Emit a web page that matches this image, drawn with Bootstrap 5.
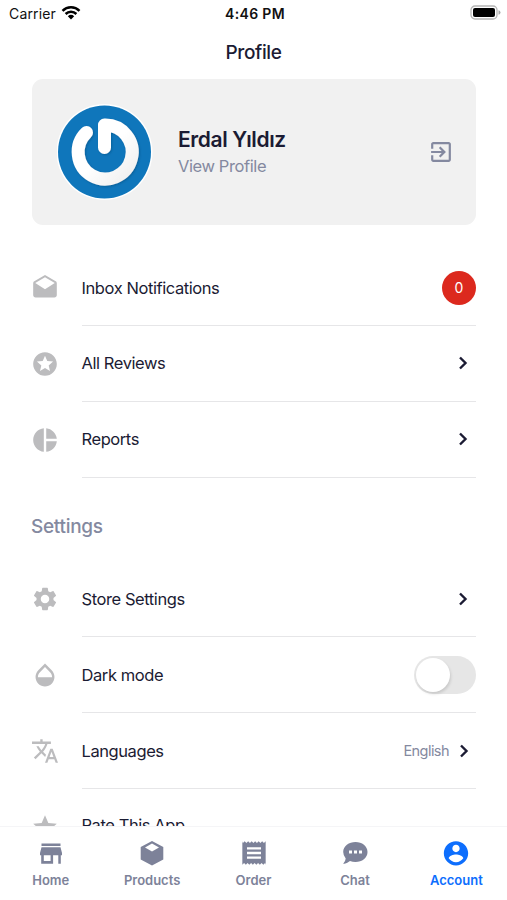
<!DOCTYPE html>
<html lang="en">
<head>
<meta charset="utf-8">
<meta name="viewport" content="width=device-width, initial-scale=1">
<title>Profile</title>
<link href="https://cdn.jsdelivr.net/npm/bootstrap@5.3.0/dist/css/bootstrap.min.css" rel="stylesheet">
<style>
:root{--ink:#1b1b33;--muted:#8489a0;--glyph:#bcbcbe}
body{font-family:Inter,"Liberation Sans",sans-serif;color:var(--ink);background:#fff}
svg{display:block;flex:none;fill:currentColor}
.screen{height:900px;overflow:hidden}
.status-bar{height:28px;padding:0 6px 0 9px;color:#111;font-size:14px;line-height:28px}
.status-bar>div{flex:1 1 0}
.carrier-name{letter-spacing:.15px;margin-right:5px}
.clock{font-weight:600;letter-spacing:.35px}
.page-title{height:51px;padding-top:12px;font-size:19px;line-height:26px;font-weight:500;letter-spacing:-.4px}
.scroller{padding:0 31px;min-height:0}
.profile-card{height:146px;flex:none;background:#f1f1f1;border-radius:11px;padding:0 24px 0 25px;margin-left:1px}
.profile-copy{margin-left:25px}
.profile-name{font-size:21px;line-height:28px;font-weight:600;letter-spacing:-.4px}
.profile-link{font-size:16.5px;line-height:24px;color:var(--muted);letter-spacing:-.4px}
.group-one{margin-top:25px}
.entry{height:76px;flex:none}
.entry-icon{width:51px;color:var(--glyph);padding-left:1px}
.entry-body{border-bottom:1px solid #e6e6e8;font-size:16.5px;letter-spacing:-.42px;line-height:24px}
.upper .entry-body,.upper .entry-icon{padding-bottom:1px}
.entry.group-one .entry-body{padding-bottom:0}
.entry-body>span:first-child{margin-left:-.5px}
.section-title{height:83px;flex:none;padding-top:36px;font-size:19px;line-height:26px;font-weight:500;color:var(--muted);letter-spacing:-.3px}
.count{width:34px;height:34px;background:#dc291e;font-size:14px;letter-spacing:0}
.toggle{width:62px;height:38px;border-radius:19px;background:#e6e6e6;padding:2px}
.knob{width:34px;height:34px;border-radius:50%;background:#fff;box-shadow:1px 2px 3px rgba(0,0,0,.13)}
.lang{font-size:14.500px;color:var(--muted);letter-spacing:-.55px;margin-right:9px}
.chev{margin-right:7px}
.lang+.chev{margin-right:6px}
.tabs{height:74px;flex:none;background:#fff;border-top:1px solid #f5f5f7;color:#7d8299;font-size:13px;font-weight:600;line-height:18px}
.tab{flex:1 1 0;padding-top:12px}
.tab.current{color:#0d6efd}
.tab span{margin-top:4px}
</style>
<script src="https://cdn.jsdelivr.net/npm/bootstrap@5.3.0/dist/js/bootstrap.bundle.min.js"></script>
</head>
<body>
<div class="screen d-flex flex-column">
  <header>
    <div class="status-bar d-flex">
      <div class="d-flex align-items-center"><span class="carrier-name">Carrier</span>
        <svg class="mb-1" width="20" height="15" viewBox="0 0 20 15"><path fill="none" stroke="#000" stroke-width="2.500" d="M1.500 5.800a12.200 12.200 0 0 1 17 0M4.600 9a7.700 7.700 0 0 1 10.800 0"/><path fill="#000" d="M6.800 11.300a4.700 4.700 0 0 1 6.400 0L10 14.500z"/></svg>
      </div>
      <div class="clock text-center">4:46 PM</div>
      <div class="d-flex align-items-center justify-content-end">
        <svg class="mb-1" width="31" height="15" viewBox="0 0 31 15"><rect x="1" y="1" width="26" height="13" rx="4" fill="#fff" stroke="#b5b5b5" stroke-width="1.300"/><rect x="3" y="3" width="22" height="9" rx="2" fill="#000"/><path d="M28.500 5.200q2 .5 2 2.300t-2 2.300z" fill="#aaa"/></svg>
      </div>
    </div>
    <h1 class="page-title text-center m-0">Profile</h1>
  </header>
  <main class="scroller d-flex flex-column flex-grow-1 overflow-hidden">
    <section class="profile-card d-flex align-items-center">
      <svg width="96" height="96" viewBox="0 0 96 96">
        <defs><filter id="soft" x="-20%" y="-20%" width="140%" height="140%"><feDropShadow dx="1" dy="1" stdDeviation="1.200" flood-color="#064a78" flood-opacity=".5"/></filter>
        <linearGradient id="tube" x1="0" y1="0" x2="1" y2="1"><stop offset=".5" stop-color="#fff"/><stop offset="1" stop-color="#efefef"/></linearGradient></defs>
        <circle cx="47.500" cy="48" r="48" fill="#fff"/><circle cx="47.500" cy="48" r="46.500" fill="#0f76bb"/>
        <path filter="url(#soft)" fill="none" stroke="url(#tube)" stroke-width="13" stroke-linecap="round" stroke-linejoin="round" d="M29.500 28.500A27 27 0 1 0 47.500 21V43.500"/>
      </svg>
      <div class="profile-copy flex-grow-1">
        <div class="profile-name">Erdal Yıldız</div>
        <div class="profile-link">View Profile</div>
      </div>
      <svg width="22" height="22" viewBox="2 2 20 20" color="#8489a0"><path d="M10.090 15.590 11.500 17l5-5-5-5-1.410 1.410L12.670 11H3v2h9.670l-2.580 2.590zM19 3H5c-1.110 0-2 .9-2 2v4h2V5h14v14H5v-4H3v4c0 1.100.89 2 2 2h14c1.100 0 2-.9 2-2V5c0-1.100-.9-2-2-2z"/></svg>
    </section>

    <div class="entry upper d-flex group-one">
      <div class="entry-icon d-flex align-items-center"><svg width="26" height="26" viewBox="1 1 22 22"><path d="M21.990 8c0-.72-.37-1.350-.94-1.700L12 1 2.950 6.300C2.380 6.650 2 7.280 2 8v10c0 1.100.9 2 2 2h16c1.100 0 2-.9 2-2l-.01-10zM12 13 3.740 7.840 12 3l8.260 4.840L12 13z"/></svg></div>
      <div class="entry-body d-flex align-items-center justify-content-between flex-grow-1"><span>Inbox Notifications</span><span class="count rounded-circle text-white d-flex align-items-center justify-content-center">0</span></div>
    </div>
    <div class="entry upper d-flex">
      <div class="entry-icon d-flex align-items-center"><svg width="26" height="26" viewBox="1 1 22 22"><path d="M11.990 2C6.470 2 2 6.480 2 12s4.470 10 9.990 10C17.520 22 22 17.520 22 12S17.520 2 11.990 2zm4.240 16L12 15.450 7.770 18l1.120-4.810-3.730-3.230 4.920-.42L12 5l1.920 4.530 4.920.42-3.730 3.230L16.230 18z"/></svg></div>
      <div class="entry-body d-flex align-items-center justify-content-between flex-grow-1"><span>All Reviews</span><svg class="chev" width="12" height="16" viewBox="0 0 12 16"><path d="m3 2.500 5.500 5.500L3 13.500" fill="none" stroke="currentColor" stroke-width="2.400"/></svg></div>
    </div>
    <div class="entry upper d-flex">
      <div class="entry-icon d-flex align-items-center"><svg width="26" height="26" viewBox="1 1 22 22"><path d="M11 2v20c-5.070-.5-9-4.790-9-10s3.930-9.500 9-10zm2.030 0v8.990H22c-.47-4.740-4.240-8.520-8.970-8.990zm0 11.010V22c4.740-.47 8.500-4.250 8.970-8.990h-8.970z"/></svg></div>
      <div class="entry-body d-flex align-items-center justify-content-between flex-grow-1"><span>Reports</span><svg class="chev" width="12" height="16" viewBox="0 0 12 16"><path d="m3 2.500 5.500 5.500L3 13.500" fill="none" stroke="currentColor" stroke-width="2.400"/></svg></div>
    </div>

    <h2 class="section-title m-0">Settings</h2>

    <div class="entry d-flex">
      <div class="entry-icon d-flex align-items-center"><svg width="26" height="26" viewBox="1 1 22 22"><path d="M19.140 12.940c.04-.3.06-.61.06-.94 0-.32-.02-.64-.07-.94l2.030-1.580c.18-.14.23-.41.12-.61l-1.920-3.320c-.12-.22-.37-.29-.59-.22l-2.390.96c-.5-.38-1.030-.7-1.620-.94l-.36-2.540c-.04-.24-.24-.41-.48-.41h-3.840c-.24 0-.43.17-.47.41l-.36 2.540c-.59.24-1.130.57-1.620.94l-2.390-.96c-.22-.08-.47 0-.59.22L2.740 8.870c-.12.21-.08.47.12.61l2.030 1.580c-.05.3-.09.63-.09.94s.02.64.07.94l-2.030 1.580c-.18.14-.23.41-.12.61l1.920 3.320c.12.22.37.29.59.22l2.390-.96c.5.38 1.030.7 1.620.94l.36 2.540c.05.24.24.41.48.41h3.840c.24 0 .44-.17.47-.41l.36-2.540c.59-.24 1.130-.56 1.620-.94l2.390.96c.22.08.47 0 .59-.22l1.920-3.320c.12-.22.07-.47-.12-.61l-2.010-1.580zM12 15.600c-1.980 0-3.600-1.620-3.600-3.600s1.620-3.600 3.600-3.600 3.600 1.620 3.600 3.600-1.620 3.600-3.600 3.600z"/></svg></div>
      <div class="entry-body d-flex align-items-center justify-content-between flex-grow-1"><span>Store Settings</span><svg class="chev" width="12" height="16" viewBox="0 0 12 16"><path d="m3 2.500 5.500 5.500L3 13.500" fill="none" stroke="currentColor" stroke-width="2.400"/></svg></div>
    </div>
    <div class="entry d-flex">
      <div class="entry-icon d-flex align-items-center"><svg width="26" height="26" viewBox="1 1 22 22"><path d="M17.660 8 12 2.350 6.340 8C4.780 9.560 4 11.640 4 13.640s.78 4.110 2.340 5.670 3.610 2.350 5.660 2.350 4.100-.79 5.660-2.350S20 15.640 20 13.640 19.220 9.560 17.660 8zM6 14c.01-2 .62-3.270 1.760-4.400L12 5.270l4.240 4.380C17.380 10.770 17.990 12 18 14H6z"/></svg></div>
      <div class="entry-body d-flex align-items-center justify-content-between flex-grow-1"><span>Dark mode</span><div class="toggle" role="switch" aria-checked="false"><div class="knob"></div></div></div>
    </div>
    <div class="entry d-flex">
      <div class="entry-icon d-flex align-items-center"><svg width="26" height="26" viewBox="1 1 22 22"><path d="m12.870 15.070-2.540-2.510.03-.03c1.740-1.940 2.980-4.170 3.710-6.530H17V4h-7V2H8v2H1v1.990h11.170C11.500 7.920 10.440 9.750 9 11.350 8.070 10.320 7.300 9.190 6.690 8h-2c.73 1.630 1.730 3.170 2.980 4.560l-5.090 5.020L4 19l5-5 3.110 3.110.76-2.040zM18.500 10h-2L12 22h2l1.120-3h4.750L21 22h2l-4.500-12zm-2.620 7 1.620-4.330L19.120 17h-3.240z"/></svg></div>
      <div class="entry-body d-flex align-items-center flex-grow-1"><span>Languages</span><span class="lang ms-auto">English</span><svg class="chev" width="12" height="16" viewBox="0 0 12 16"><path d="m3 2.500 5.500 5.500L3 13.500" fill="none" stroke="currentColor" stroke-width="2.400"/></svg></div>
    </div>
    <div class="entry d-flex">
      <div class="entry-icon d-flex align-items-center"><svg width="26" height="26" viewBox="1 1 22 22"><path d="M12 17.270 18.180 21l-1.640-7.030L22 9.240l-7.190-.61L12 2 9.190 8.630 2 9.240l5.460 4.730L5.820 21z"/></svg></div>
      <div class="entry-body upper-text d-flex align-items-center flex-grow-1 pb-1"><span>Rate This App</span></div>
    </div>
  </main>
  <nav class="tabs d-flex">
    <div class="tab d-flex flex-column align-items-center"><svg width="28" height="28" viewBox="0 0 28 28"><path fill-rule="evenodd" d="M4.500 4.500h19V7h-19zM4.500 8.300h19L25 14v2.300h-1.200v8.400h-2.500v-8.400h-5.200v8.400H4.200v-8.400H3V14zM6.800 16.300v5.800h6.800v-5.800z"/></svg><span>Home</span></div>
    <div class="tab d-flex flex-column align-items-center"><svg width="28" height="28" viewBox="0 0 28 28"><path fill-rule="evenodd" d="M14 2 25.300 8v12.500L14 26.500 2.700 20.500V8zM14 4.500 7 8.500l7 4 7-4z"/></svg><span>Products</span></div>
    <div class="tab d-flex flex-column align-items-center"><svg width="28" height="28" viewBox="0 0 24 24"><path d="M18 17H6v-2h12v2zm0-4H6v-2h12v2zm0-4H6V7h12v2zM2 22l1.500-1.500L5 22l1.500-1.500L8 22l1.500-1.500L11 22l1.500-1.500L14 22l1.500-1.500L17 22l1.500-1.500L20 22l1.500-1.500L22 22V2l-1.500 1.500L19 2l-1.500 1.500L16 2l-1.500 1.500L13 2l-1.500 1.500L10 2 8.500 3.500 7 2 5.500 3.500 4 2 2.500 3.500 2 2z"/></svg><span>Order</span></div>
    <div class="tab d-flex flex-column align-items-center"><svg width="28" height="28" viewBox="0 0 28 28"><path fill-rule="evenodd" d="M14.500 3C21 3 26.500 7 26.500 13S21 23 14.500 23q-3 0-5.500-1-3.500 3-7 3 2.500-2.500 2.700-5.500Q2.200 16.500 2.200 13C2.200 7 8 3 14.500 3zM8 11.500v3h3v-3zm5 0v3h3v-3zm5 0v3h3v-3z"/></svg><span>Chat</span></div>
    <div class="tab current d-flex flex-column align-items-center"><svg width="30" height="28" viewBox="0 0 23 23"><path transform="translate(-.5 -.2)" d="M12 2C6.480 2 2 6.480 2 12s4.480 10 10 10 10-4.480 10-10S17.520 2 12 2zm0 3c1.660 0 3 1.340 3 3s-1.340 3-3 3-3-1.340-3-3 1.340-3 3-3zm0 14.200c-2.500 0-4.710-1.280-6-3.220.03-1.990 4-3.080 6-3.080 1.990 0 5.970 1.090 6 3.080-1.290 1.940-3.500 3.220-6 3.220z"/></svg><span>Account</span></div>
  </nav>
</div>
</body>
</html>
